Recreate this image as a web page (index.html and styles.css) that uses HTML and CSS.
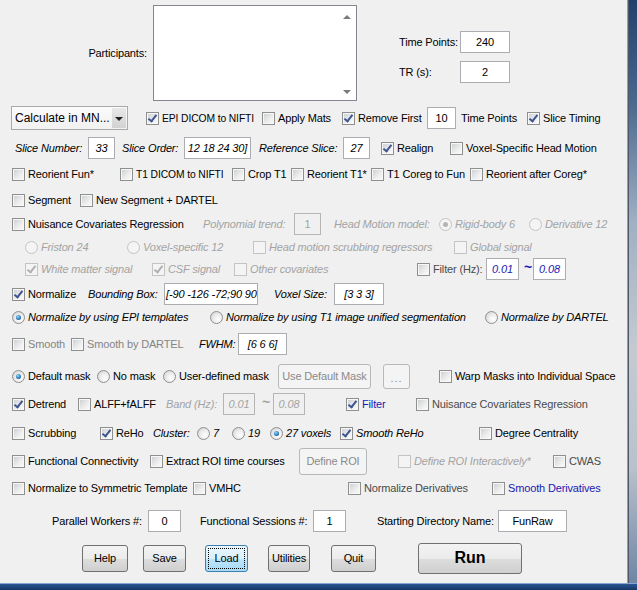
FILE: index.html
```html
<!DOCTYPE html>
<html lang="en">
<head>
    <meta charset="UTF-8">
    <title>DPARSF</title>
    <link rel="stylesheet" href="styles.css">
</head>
<body>
<div class="screen">
    <div class="window">
        <div class="panel">
            <div class="top">
                <div class="part-label">Participants:</div>
                <div class="listbox">
                    <span class="arrow up"></span>
                    <span class="arrow down"></span>
                </div>
                <div class="params">
                    <span>Time Points:</span><span class="edit w50">240</span>
                    <span>TR (s):</span><span class="edit w50">2</span>
                </div>
            </div>

            <div class="row r1">
                <div class="popup">Calculate in MN...<span class="drop"></span></div>
                <label class="cb on caps"><span class="box"></span>EPI DICOM to NIFTI</label>
                <label class="cb"><span class="box"></span>Apply Mats</label>
                <label class="cb on"><span class="box"></span>Remove First</label>
                <span class="edit w29">10</span>
                <span>Time Points</span>
                <label class="cb on"><span class="box"></span>Slice Timing</label>
            </div>

            <div class="row r2">
                <span class="it">Slice Number:</span>
                <span class="edit w27 it">33</span>
                <span class="it">Slice Order:</span>
                <span class="edit w67 it">12 18 24 30]</span>
                <span class="it">Reference Slice:</span>
                <span class="edit w27 it">27</span>
                <label class="cb on"><span class="box"></span>Realign</label>
                <label class="cb"><span class="box"></span>Voxel-Specific Head Motion</label>
            </div>

            <div class="row r3">
                <label class="cb"><span class="box"></span>Reorient Fun*</label>
                <label class="cb caps"><span class="box"></span>T1 DICOM to NIFTI</label>
                <label class="cb"><span class="box"></span>Crop T1</label>
                <label class="cb"><span class="box"></span>Reorient T1*</label>
                <label class="cb"><span class="box"></span>T1 Coreg to Fun</label>
                <label class="cb"><span class="box"></span>Reorient after Coreg*</label>
            </div>

            <div class="row r4">
                <label class="cb"><span class="box"></span>Segment</label>
                <label class="cb"><span class="box"></span>New Segment + DARTEL</label>
            </div>

            <div class="row r5">
                <label class="cb"><span class="box"></span>Nuisance Covariates Regression</label>
                <span class="it dim">Polynomial trend:</span>
                <span class="edit w27 off">1</span>
                <span class="it dim">Head Motion model:</span>
                <label class="rb on dis it"><span class="dot"></span>Rigid-body 6</label>
                <label class="rb dis it"><span class="dot"></span>Derivative 12</label>
            </div>

            <div class="row r6">
                <label class="rb dis it"><span class="dot"></span>Friston 24</label>
                <label class="rb dis it"><span class="dot"></span>Voxel-specific 12</label>
                <label class="cb dis it"><span class="box"></span>Head motion scrubbing regressors</label>
                <label class="cb dis it"><span class="box"></span>Global signal</label>
            </div>

            <div class="row r7">
                <label class="cb on dis it"><span class="box"></span>White matter signal</label>
                <label class="cb on dis it"><span class="box"></span>CSF signal</label>
                <label class="cb dis it"><span class="box"></span>Other covariates</label>
                <label class="cb soft"><span class="box"></span>Filter (Hz):</label>
                <span class="edit w33 it blue">0.01</span>
                <span class="tilde blue">~</span>
                <span class="edit w33 it blue">0.08</span>
            </div>

            <div class="row r8">
                <label class="cb on"><span class="box"></span>Normalize</label>
                <span class="it">Bounding Box:</span>
                <span class="edit w94 it left">[-90 -126 -72;90 90</span>
                <span class="it">Voxel Size:</span>
                <span class="edit w50 it">[3 3 3]</span>
            </div>

            <div class="row r9">
                <label class="rb on it"><span class="dot"></span>Normalize by using EPI templates</label>
                <label class="rb it"><span class="dot"></span>Normalize by using T1 image unified segmentation</label>
                <label class="rb it"><span class="dot"></span>Normalize by DARTEL</label>
            </div>

            <div class="row r10">
                <label class="cb muted"><span class="box"></span>Smooth</label>
                <label class="cb muted"><span class="box"></span>Smooth by DARTEL</label>
                <span class="it">FWHM:</span>
                <span class="edit w49 it">[6 6 6]</span>
            </div>

            <div class="row r11">
                <label class="rb on"><span class="dot"></span>Default mask</label>
                <label class="rb"><span class="dot"></span>No mask</label>
                <label class="rb"><span class="dot"></span>User-defined mask</label>
                <span class="btn off short w93">Use Default Mask</span>
                <span class="btn off short w27 dots">...</span>
                <label class="cb"><span class="box"></span>Warp Masks into Individual Space</label>
            </div>

            <div class="row r12">
                <label class="cb on"><span class="box"></span>Detrend</label>
                <label class="cb"><span class="box"></span>ALFF+fALFF</label>
                <span class="it dim">Band (Hz):</span>
                <span class="edit w32 it off">0.01</span>
                <span class="tilde dim">~</span>
                <span class="edit w32 it off">0.08</span>
                <label class="cb on blue"><span class="box"></span>Filter</label>
                <label class="cb soft"><span class="box"></span>Nuisance Covariates Regression</label>
            </div>

            <div class="row r13">
                <label class="cb"><span class="box"></span>Scrubbing</label>
                <label class="cb on"><span class="box"></span>ReHo</label>
                <span class="it">Cluster:</span>
                <label class="rb it"><span class="dot"></span>7</label>
                <label class="rb it"><span class="dot"></span>19</label>
                <label class="rb on it"><span class="dot"></span>27 voxels</label>
                <label class="cb on it"><span class="box"></span>Smooth ReHo</label>
                <label class="cb"><span class="box"></span>Degree Centrality</label>
            </div>

            <div class="row r14">
                <label class="cb"><span class="box"></span>Functional Connectivity</label>
                <label class="cb"><span class="box"></span>Extract ROI time courses</label>
                <span class="btn off w68">Define ROI</span>
                <label class="cb dis it"><span class="box"></span>Define ROI Interactively*</label>
                <label class="cb soft"><span class="box"></span>CWAS</label>
            </div>

            <div class="row r15">
                <label class="cb"><span class="box"></span>Normalize to Symmetric Template</label>
                <label class="cb"><span class="box"></span>VMHC</label>
                <label class="cb soft"><span class="box"></span>Normalize Derivatives</label>
                <label class="cb blue"><span class="box"></span>Smooth Derivatives</label>
            </div>

            <div class="row r16">
                <span>Parallel Workers #:</span>
                <span class="edit w33">0</span>
                <span>Functional Sessions #:</span>
                <span class="edit w33">1</span>
                <span>Starting Directory Name:</span>
                <span class="edit w69">FunRaw</span>
            </div>

            <div class="row r17">
                <span class="btn w46">Help</span>
                <span class="btn w43">Save</span>
                <span class="btn w43 focus">Load</span>
                <span class="btn w42">Utilities</span>
                <span class="btn w45">Quit</span>
                <span class="btn run w104">Run</span>
            </div>
        </div>
        <div class="frame"></div>
    </div>
    <div class="taskbar"></div>
</div>
</body>
</html>
```

FILE: styles.css
```css
*{margin:0;padding:0;box-sizing:border-box;}
body{width:637px;height:590px;overflow:hidden;background:#f0f0f0;font-family:"Liberation Sans", Arial, sans-serif;font-size:11px;letter-spacing:-0.15px;color:#000;}
.screen{display:flex;flex-direction:column;height:590px;}
.window{display:flex;height:583px;}
.panel{width:628px;height:583px;border-right:1px solid #9c9c9c;background:#f0f0f0;}
.frame{flex:1;border-left:1px solid #50576a;background:linear-gradient(#22406a 0%, #4c6a8e 18%, #9fb0c2 38%, #c4cad0 60%, #b9c2cc 80%, #6f86a4 100%);}
.taskbar{height:7px;border-top:1px solid #86a4cf;background:linear-gradient(#2a5692, #163666);}

/* top block */
.top{display:flex;height:105px;}
.part-label{width:147px;text-align:right;align-self:center;}
.listbox{position:relative;width:204px;height:96px;margin:5px 0 0 6px;background:#fff;border:1px solid #828790;}
.arrow{position:absolute;right:5px;width:0;height:0;border-left:4px solid transparent;border-right:4px solid transparent;}
.arrow.up{top:9px;border-bottom:4px solid #7a7a7a;}
.arrow.down{bottom:6px;border-top:4px solid #7a7a7a;}
.params{display:grid;grid-template-columns:61px auto;grid-template-rows:22px 22px;row-gap:8px;align-items:center;margin:31px 0 0 42px;}

/* rows */
.row{display:grid;grid-template-rows:22px;align-items:center;justify-items:start;white-space:nowrap;}
.r1{margin-top:2px;padding-left:11px;grid-template-columns:135px 116px 80px 85px 34px 66px auto;}
.r2{margin-top:8px;padding-left:15px;grid-template-columns:73px 34px 62px 75px 84px 38px 69px auto;}
.r3{margin-top:4px;padding-left:12px;grid-template-columns:108px 112px 59px 80px 99px auto;}
.r4{margin-top:4px;padding-left:12px;grid-template-columns:68px auto;}
.r5{margin-top:2px;padding-left:12px;grid-template-columns:191px 91px 40px 105px 90px auto;}
.r6{margin-top:1px;padding-left:25px;grid-template-columns:102px 126px 201px auto;}
.r7{margin-top:0;padding-left:25px;grid-template-columns:127px 82px 183px 69px 38px 9px auto;}
.r8{margin-top:3px;padding-left:12px;grid-template-columns:76px 76px 110px 60px auto;}
.r9{margin-top:1px;padding-left:12px;grid-template-columns:198px 275px auto;}
.r10{margin-top:5px;padding-left:12px;grid-template-columns:59px 128px 39px auto;}
.r11{margin-top:10px;padding-left:12px;grid-template-columns:85px 66px 115px 105px 56px auto;}
.r12{margin-top:6px;padding-left:12px;grid-template-columns:66px 88px 57px 39px 11px 73px 70px auto;}
.r13{margin-top:7px;padding-left:12px;grid-template-columns:88px 53px 44px 35px 38px 70px 139px auto;}
.r14{margin-top:6px;padding-left:12px;grid-template-columns:138px 149px 99px 155px auto;}
.r15{margin-top:5px;padding-left:12px;grid-template-columns:181px 155px 144px auto;}
.r16{margin-top:11px;padding-left:52px;grid-template-columns:96px 52px 113px 64px 121px auto;}
.r17{margin-top:15px;padding-left:82px;grid-template-columns:61px 62px 63px 63px 87px auto;}

/* text styles */
.it{font-style:italic;}
.caps{font-size:10.3px;letter-spacing:-0.1px;}
.dim{color:#a3a3a3;}
.muted{color:#858585;}
.soft{color:#4a4a4a;}
.blue{color:#1a1ab4;}
.tilde{font-size:14px;font-weight:bold;line-height:14px;margin-top:-5px;}

/* edit boxes */
.edit{display:flex;align-items:center;justify-content:center;height:22px;background:#fff;border:1px solid #abadb3;overflow:hidden;}
.edit.left{justify-content:flex-start;padding-left:1px;}
.edit.off{background:#f0f0f0;border-color:#b5b5b5;color:#a3a3a3;}
.w27{width:27px;}.w29{width:29px;}.w32{width:32px;}.w33{width:33px;}
.w42{width:42px;}.w43{width:43px;}.w45{width:45px;}.w46{width:46px;}
.w49{width:49px;}.w50{width:50px;}.w67{width:67px;}.w68{width:68px;}
.w69{width:69px;}.w93{width:93px;}.w94{width:94px;}.w104{width:104px;}

/* popup menu */
.popup{position:relative;display:flex;align-items:center;width:117px;height:24px;padding-left:3px;font-size:12px;letter-spacing:0;background:linear-gradient(#fbfbfb,#f1f1f1);border:1px solid #a9a9a9;}
.drop{position:absolute;right:1px;top:1px;bottom:1px;width:14px;background:linear-gradient(#e8e8e8,#d2d2d2);}
.drop::after{content:'';position:absolute;left:3px;top:9px;border-left:4px solid transparent;border-right:4px solid transparent;border-top:4px solid #222;}

/* checkboxes */
.cb{display:flex;align-items:center;}
.cb .box{position:relative;width:13px;height:13px;margin-right:3px;border:1px solid #8e8f8f;background:linear-gradient(135deg,#c9ccd1 0%,#eeeeee 60%,#fbfbfb 100%);box-shadow:inset 0 0 0 1px #f7f7f7;}
.cb.on .box::after{content:'';position:absolute;left:3px;top:0;width:3px;height:7px;border:solid #3d5590;border-width:0 2px 2px 0;transform:rotate(38deg);}
.cb.dis{color:#a3a3a3;}
.cb.dis .box{border-color:#c4c4c4;background:#f4f4f4;box-shadow:none;}
.cb.on.dis .box::after{border-color:#b0b0b0;}

/* radio buttons */
.rb{display:flex;align-items:center;}
.rb .dot{position:relative;width:13px;height:13px;margin-right:3px;border:1px solid #8e8f8f;border-radius:50%;background:radial-gradient(circle at 65% 65%,#ffffff 0%,#ececec 45%,#cdcdcd 100%);}
.rb.on .dot::after{content:'';position:absolute;left:3px;top:3px;width:5px;height:5px;border-radius:50%;background:radial-gradient(circle at 40% 35%,#9ad8f8 0%,#2a7fc0 55%,#123f73 100%);}
.rb.dis{color:#a3a3a3;}
.rb.dis .dot{border-color:#c4c4c4;background:#f4f4f4;}
.rb.on.dis .dot::after{background:#b5b5b5;}

/* push buttons */
.btn{display:flex;align-items:center;justify-content:center;height:27px;border:1px solid #707070;border-radius:3px;background:linear-gradient(#f3f3f3 0%,#ebebeb 50%,#dddddd 51%,#cfcfcf 100%);}
.btn.short{height:25px;}
.btn.off{border-color:#b5b9bc;background:#f4f4f4;color:#8a8a8a;}
.btn.dots{align-items:flex-end;padding-bottom:4px;letter-spacing:1px;}
.btn.focus{border-color:#3c7fb1;background:linear-gradient(#eaf6fd 0%,#d9f0fc 50%,#bee6fd 51%,#a7d9f5 100%);outline:1px dotted #000;outline-offset:-4px;}
.btn.run{height:31px;font-size:16px;font-weight:bold;letter-spacing:0;}
```
